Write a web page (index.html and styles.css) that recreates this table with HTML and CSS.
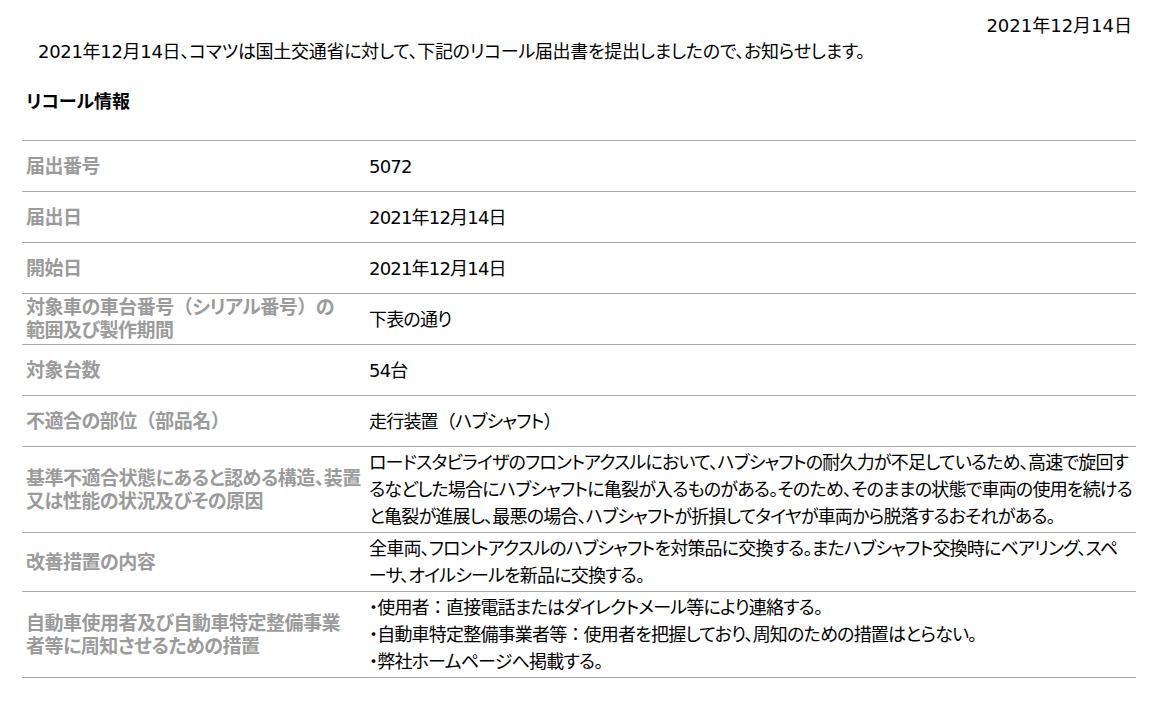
FILE: index.html
```html
<!DOCTYPE html>
<html lang="ja">
<head>
    <meta charset="UTF-8">
    <meta name="viewport" content="width=device-width, initial-scale=1.0">
    <title>リコール情報</title>
    <link rel="stylesheet" href="styles.css">
</head>
<body>
    <div class="page">
        <p class="date">2021年12月14日</p>
        <p class="lead">2021年12月14日、コマツは国土交通省に対して、下記のリコール届出書を提出しましたので、お知らせします。</p>

        <h2 class="title">リコール情報</h2>

        <table class="recall">
            <colgroup>
                <col class="col-label">
                <col>
            </colgroup>
            <tr>
                <th>届出番号</th>
                <td>5072</td>
            </tr>
            <tr>
                <th>届出日</th>
                <td>2021年12月14日</td>
            </tr>
            <tr>
                <th>開始日</th>
                <td>2021年12月14日</td>
            </tr>
            <tr>
                <th>対象車の車台番号<span class="wide">（</span>シリアル番号<span class="wide">）</span>の<br>範囲及び製作期間</th>
                <td>下表の通り</td>
            </tr>
            <tr>
                <th>対象台数</th>
                <td>54台</td>
            </tr>
            <tr>
                <th>不適合の部位<span class="wide">（</span>部品名<span class="wide">）</span></th>
                <td>走行装置<span class="wide">（</span>ハブシャフト<span class="wide">）</span></td>
            </tr>
            <tr>
                <th>基準不適合状態にあると認める構造、装置<br>又は性能の状況及びその原因</th>
                <td>ロードスタビライザのフロントアクスルにおいて、ハブシャフトの耐久力が不足しているため、高速で旋回するなどした場合にハブシャフトに亀裂が入るものがある。そのため、そのままの状態で車両の使用を続けると亀裂が進展し、最悪の場合、ハブシャフトが折損してタイヤが車両から脱落するおそれがある。</td>
            </tr>
            <tr>
                <th>改善措置の内容</th>
                <td>全車両、フロントアクスルのハブシャフトを対策品に交換する。またハブシャフト交換時にベアリング、スペーサ、オイルシールを新品に交換する。</td>
            </tr>
            <tr>
                <th>自動車使用者及び自動車特定整備事業<br>者等に周知させるための措置</th>
                <td>・使用者<span class="wide">：</span>直接電話またはダイレクトメール等により連絡する。<br>・自動車特定整備事業者等<span class="wide">：</span>使用者を把握しており、周知のための措置はとらない。<br>・弊社ホームページへ掲載する。</td>
            </tr>
        </table>
    </div>
</body>
</html>
```

FILE: styles.css
```css
body {
    margin: 0;
    background-color: #fff;
    color: #000;
    font-family: "DejaVu Sans", "Noto Sans CJK JP", sans-serif;
    font-size: 18px;
    font-feature-settings: "palt";
}
.page {
    width: 1114px;
    margin-left: 22px;
    padding-top: 13px;
}
.date {
    margin: 0;
    padding-right: 4px;
    text-align: right;
    line-height: 26px;
}
.lead {
    margin: 0;
    padding-left: 16px;
    line-height: 26px;
    letter-spacing: -0.3px;
}
.title {
    margin: 24px 0 0;
    padding-left: 4px;
    font-size: 18px;
    font-weight: bold;
    line-height: 26px;
}
.recall {
    width: 100%;
    margin-top: 25px;
    table-layout: fixed;
    border-collapse: collapse;
    border-top: 1px solid #aaa;
}
.col-label {
    width: 343px;
}
.recall tr {
    border-bottom: 1px solid #aaa;
}
.recall th,
.recall td {
    height: 46px;
    padding: 2px 4px;
    vertical-align: middle;
    text-align: left;
}
.recall th {
    color: #9b9b9b;
    font-size: 19px;
    font-weight: bold;
    line-height: 23px;
    letter-spacing: -0.5px;
    white-space: nowrap;
}
.recall td {
    line-height: 1.5;
    letter-spacing: -0.8px;
}
.wide {
    font-feature-settings: normal;
}
```
